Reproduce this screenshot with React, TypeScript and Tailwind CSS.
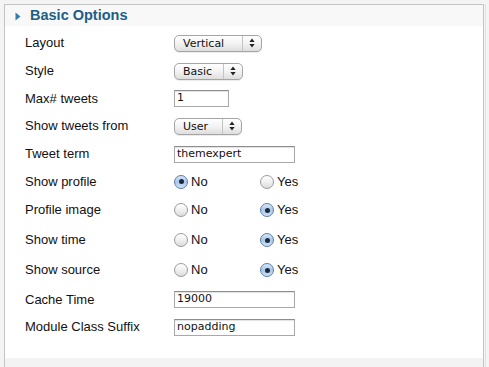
import React from "react";

const labelFont = { fontFamily: '"Liberation Sans", Arial, sans-serif' };
const ctrlFont = { fontFamily: '"DejaVu Sans", "Lucida Grande", sans-serif' };

function Select({ value, width }: { value: string; width: number }) {
  return (
    <div
      className="relative flex h-[17px] items-center rounded-[5px] border border-[#a5a5a5] bg-gradient-to-b from-[#ffffff] via-[#f3f3f3] to-[#dedede] text-[11px] text-[#111] shadow-[0_1px_0_rgba(0,0,0,0.08)]"
      style={{ ...ctrlFont, width }}
    >
      <span className="pl-[8px] leading-none">{value}</span>
      <div className="absolute right-0 top-0 flex h-full w-[19px] flex-col items-center justify-center border-l border-[#c4c4c4]">
        <svg width="6" height="10" viewBox="0 0 6 10">
          <path d="M3 0.5 L5.6 4 H0.4 Z" fill="#222" />
          <path d="M3 9.5 L5.6 6 H0.4 Z" fill="#222" />
        </svg>
      </div>
    </div>
  );
}

function TextInput({ value, width }: { value: string; width: number }) {
  return (
    <div
      className="flex h-[17px] items-center border border-[#a9a9a9] border-t-[#8d8d8d] bg-white pl-[2px] text-[11px] text-[#111] shadow-[inset_0_1px_1px_rgba(0,0,0,0.12)]"
      style={{ ...ctrlFont, width }}
    >
      {value}
    </div>
  );
}

function Radio({ checked }: { checked: boolean }) {
  if (checked) {
    return (
      <div className="flex h-[14px] w-[14px] items-center justify-center rounded-full border border-[#5a7fa8] bg-gradient-to-b from-[#d6e6f7] via-[#a9c8ea] to-[#cfe2f7]">
        <div className="h-[5px] w-[5px] rounded-full bg-[#1a2a3a]" />
      </div>
    );
  }
  return (
    <div className="h-[14px] w-[14px] rounded-full border border-[#9a9a9a] bg-gradient-to-b from-[#ffffff] via-[#f0f0f0] to-[#dcdcdc]" />
  );
}

function RadioPair({ yes }: { yes: boolean }) {
  return (
    <div className="flex items-center text-[13px] text-[#111]" style={labelFont}>
      <div className="flex w-[86px] items-center">
        <Radio checked={!yes} />
        <span className="ml-[3px]">No</span>
      </div>
      <div className="flex items-center">
        <Radio checked={yes} />
        <span className="ml-[3px]">Yes</span>
      </div>
    </div>
  );
}

type Row = { label: string; h: number; ctrl: React.ReactNode };

export default function App() {
  const rows: Row[] = [
    { label: "Layout", h: 28, ctrl: <Select value="Vertical" width={88} /> },
    { label: "Style", h: 28, ctrl: <Select value="Basic" width={69} /> },
    { label: "Max# tweets", h: 27, ctrl: <TextInput value="1" width={55} /> },
    { label: "Show tweets from", h: 28, ctrl: <Select value="User" width={68} /> },
    { label: "Tweet term", h: 28, ctrl: <TextInput value="themexpert" width={121} /> },
    { label: "Show profile", h: 27, ctrl: <RadioPair yes={false} /> },
    { label: "Profile image", h: 30, ctrl: <RadioPair yes={true} /> },
    { label: "Show time", h: 30, ctrl: <RadioPair yes={true} /> },
    { label: "Show source", h: 30, ctrl: <RadioPair yes={true} /> },
    { label: "Cache Time", h: 29, ctrl: <TextInput value="19000" width={121} /> },
    { label: "Module Class Suffix", h: 26, ctrl: <TextInput value="nopadding" width={121} /> },
  ];

  return (
    <div className="flex h-[367px] w-[489px] overflow-hidden bg-[#f4f4f4]">
      <div className="ml-[4px] mt-[4px] flex h-[363px] w-[480px] flex-col border-l border-r border-t border-[#c4c4c4] bg-white">
        <div className="flex h-[21px] items-center bg-[#f8f8f8] pl-[10px]">
          <svg width="6" height="9" viewBox="0 0 6 9" className="mt-[1px]">
            <path d="M0.5 0.5 L5.5 4.5 L0.5 8.5 Z" fill="#2f7fb0" />
          </svg>
          <span
            className="ml-[9px] text-[14.5px] font-bold text-[#1d5e86]"
            style={labelFont}
          >
            Basic Options
          </span>
        </div>
        <div className="flex flex-col pt-[3px]">
          {rows.map((r) => (
            <div key={r.label} className="flex items-center" style={{ height: r.h }}>
              <div
                className="w-[169px] pl-[20px] text-[13px] text-[#111]"
                style={labelFont}
              >
                {r.label}
              </div>
              {r.ctrl}
            </div>
          ))}
        </div>
        <div className="flex-1" />
        <div className="h-[9px] bg-[#f3f3f3]" />
      </div>
      <div className="ml-[1px] mt-[4px] h-[363px] w-px bg-[#e2e2e2]" />
    </div>
  );
}
